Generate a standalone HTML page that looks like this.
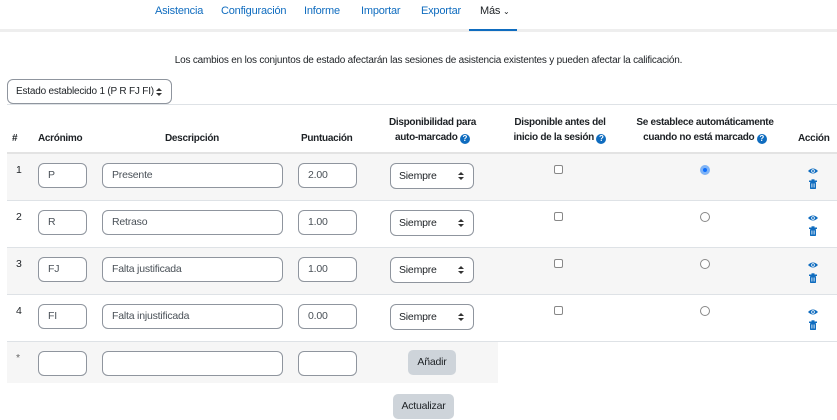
<!DOCTYPE html>
<html><head><meta charset="utf-8"><style>
*{box-sizing:border-box;margin:0;padding:0}
body{width:837px;height:420px;background:#fff;font-family:"Liberation Sans",sans-serif;font-size:10.5px;color:#1d2125;position:relative;overflow:hidden;letter-spacing:-0.2px}
.a{position:absolute;white-space:nowrap}
.nav{color:#0f6cbf;font-size:11px;top:5px}
.inp{position:absolute;height:25px;border:1px solid #8f959e;border-radius:6px;background:#fff;padding-left:9px;line-height:23px;font-size:10.5px;color:#495057;white-space:nowrap}
.sel{position:absolute;height:26px;border:1px solid #8f959e;border-radius:6px;background:#fff;padding-left:8px;line-height:24px;font-size:10.5px;color:#1d2125;white-space:nowrap}
.sel:after{content:"";position:absolute;right:9px;top:8px;border:3px solid transparent;border-bottom:3px solid #333;border-top:none}
.sel:before{content:"";position:absolute;right:9px;top:13px;border:3px solid transparent;border-top:3px solid #333;border-bottom:none}
.th{font-weight:bold;font-size:10px;text-align:center;position:absolute;line-height:15px;white-space:nowrap;letter-spacing:-0.3px}
.q{display:inline-block;width:10px;height:10px;border-radius:50%;background:#0f6cbf;color:#fff;font-size:8px;line-height:10px;text-align:center;vertical-align:-1px;letter-spacing:0}
.cb{position:absolute;width:9px;height:9px;border:1px solid #888;border-radius:2px;background:#fff}
.rd{position:absolute;width:10px;height:10px;border:1px solid #888;border-radius:50%;background:#fff}
.btn{position:absolute;background:#ced4da;border-radius:5px;text-align:center;font-size:10.5px;color:#1d2125}
</style></head><body>
<div class="a" style="left:0;top:29px;width:837px;height:3px;background:#eee"></div>
<div class="a nav" style="left:155px">Asistencia</div>
<div class="a nav" style="left:221px">Configuración</div>
<div class="a nav" style="left:304px">Informe</div>
<div class="a nav" style="left:361px">Importar</div>
<div class="a nav" style="left:421px">Exportar</div>
<div class="a nav" style="left:480px;color:#1d2125">Más <span style="font-size:8px">&#8964;</span></div>
<div class="a" style="left:469px;top:29px;width:48px;height:2px;background:#0f6cbf"></div>
<div class="a" style="left:0;top:55px;width:837px;text-align:center;font-size:10px;padding-left:20px">Los cambios en los conjuntos de estado afectarán las sesiones de asistencia existentes y pueden afectar la calificación.</div>
<div class="sel" style="left:7px;top:79px;width:165px;height:25px;line-height:23px;font-size:10px">Estado establecido 1 (P R FJ FI)</div>
<div class="a" style="left:7px;top:104px;width:830px;height:1px;background:#dee2e6"></div>
<div class="th" style="left:12px;top:131px">#</div>
<div class="th" style="left:38px;top:131px">Acrónimo</div>
<div class="th" style="left:165px;top:131px">Descripción</div>
<div class="th" style="left:301px;top:131px">Puntuación</div>
<div class="th" style="left:380px;top:115px;width:105px">Disponibilidad para<br>auto-marcado <span class="q">?</span></div>
<div class="th" style="left:505px;top:115px;width:110px">Disponible antes del<br>inicio de la sesión <span class="q">?</span></div>
<div class="th" style="left:625px;top:115px;width:160px">Se establece automáticamente<br>cuando no está marcado <span class="q">?</span></div>
<div class="th" style="left:798px;top:131px">Acción</div>
<div class="a" style="left:7px;top:152px;width:830px;height:2px;background:#e3e3e3"></div>
<div class="a" style="left:7px;top:154px;width:830px;height:47px;background:#f6f6f6;border-bottom:1px solid #dee2e6"></div>
<div class="a" style="left:7px;top:201px;width:830px;height:47px;background:#fff;border-bottom:1px solid #dee2e6"></div>
<div class="a" style="left:7px;top:248px;width:830px;height:47px;background:#f6f6f6;border-bottom:1px solid #dee2e6"></div>
<div class="a" style="left:7px;top:295px;width:830px;height:47px;background:#fff;border-bottom:1px solid #dee2e6"></div>
<div class="a" style="left:7px;top:342px;width:491px;height:41px;background:#f6f6f6"></div>

<div class="a" style="left:16px;top:164px">1</div>
<div class="inp" style="left:38px;top:163px;width:49px">P</div>
<div class="inp" style="left:102px;top:163px;width:181px">Presente</div>
<div class="inp" style="left:298px;top:163px;width:59px">2.00</div>
<div class="sel" style="left:390px;top:163px;width:84px">Siempre</div>
<div class="cb" style="left:554px;top:165px"></div>
<div class="rd" style="left:700px;top:165px;border:3px solid #7fb3f5;background:#0d6efd"></div>

<div class="a" style="left:16px;top:211px">2</div>
<div class="inp" style="left:38px;top:210px;width:49px">R</div>
<div class="inp" style="left:102px;top:210px;width:181px">Retraso</div>
<div class="inp" style="left:298px;top:210px;width:59px">1.00</div>
<div class="sel" style="left:390px;top:210px;width:84px">Siempre</div>
<div class="cb" style="left:554px;top:212px"></div>
<div class="rd" style="left:700px;top:212px"></div>

<div class="a" style="left:16px;top:258px">3</div>
<div class="inp" style="left:38px;top:257px;width:49px">FJ</div>
<div class="inp" style="left:102px;top:257px;width:181px">Falta justificada</div>
<div class="inp" style="left:298px;top:257px;width:59px">1.00</div>
<div class="sel" style="left:390px;top:257px;width:84px">Siempre</div>
<div class="cb" style="left:554px;top:259px"></div>
<div class="rd" style="left:700px;top:259px"></div>

<div class="a" style="left:16px;top:305px">4</div>
<div class="inp" style="left:38px;top:304px;width:49px">FI</div>
<div class="inp" style="left:102px;top:304px;width:181px">Falta injustificada</div>
<div class="inp" style="left:298px;top:304px;width:59px">0.00</div>
<div class="sel" style="left:390px;top:304px;width:84px">Siempre</div>
<div class="cb" style="left:554px;top:306px"></div>
<div class="rd" style="left:700px;top:306px"></div>

<svg class="a" style="left:806px;top:165px" width="14" height="200" viewBox="0 0 14 200">
<g fill="#0f6cbf">
<g id="ic"><path d="M2 6 Q7 1 12 6 Q7 11 2 6Z"/><circle cx="7" cy="6" r="1.8" fill="#fff"/><circle cx="7" cy="6" r="1"/>
<rect x="4" y="17" width="6" height="7" rx="0.8"/><rect x="3" y="15.5" width="8" height="1.5"/><rect x="5.5" y="14.3" width="3" height="1.5"/><rect x="5.5" y="18.5" width="0.8" height="4" fill="#fff"/><rect x="7.7" y="18.5" width="0.8" height="4" fill="#fff"/></g>
<use href="#ic" y="47"/><use href="#ic" y="94"/><use href="#ic" y="141"/>
</g></svg>

<div class="a" style="left:16px;top:352px;color:#666">*</div>
<div class="inp" style="left:38px;top:351px;width:49px"></div>
<div class="inp" style="left:102px;top:351px;width:181px"></div>
<div class="inp" style="left:298px;top:351px;width:59px"></div>
<div class="btn" style="left:408px;top:350px;width:48px;height:25px;line-height:25px">Añadir</div>
<div class="btn" style="left:393px;top:394px;width:61px;height:25px;line-height:25px">Actualizar</div>
</body></html>
